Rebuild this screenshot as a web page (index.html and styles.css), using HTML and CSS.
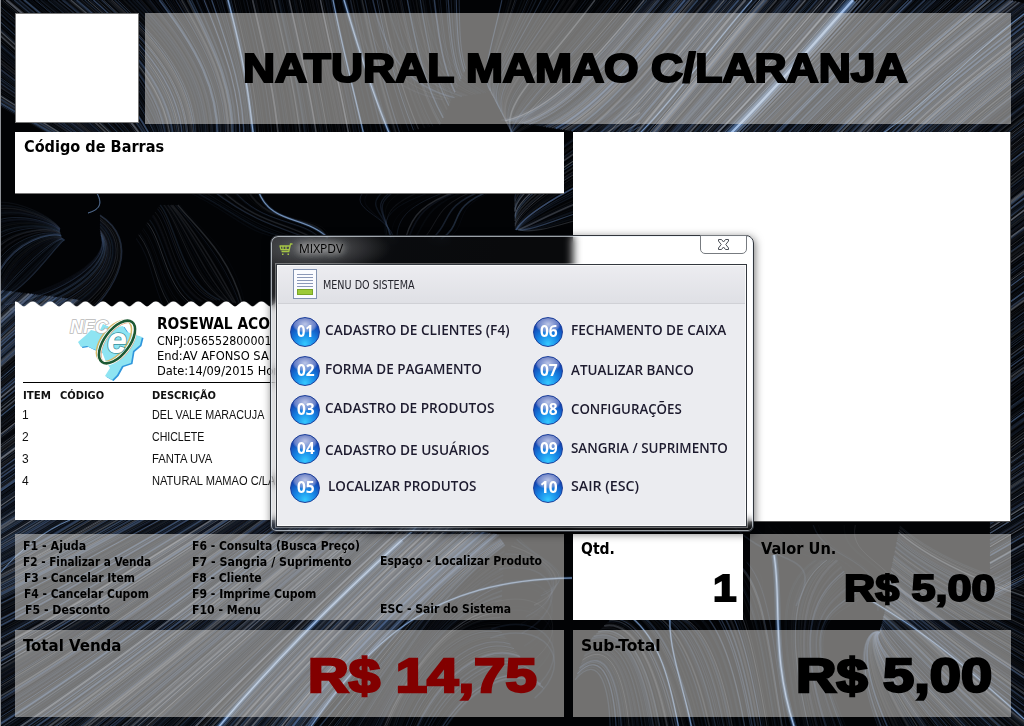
FILE: index.html
```html
<!DOCTYPE html>
<html lang="pt-BR">
<head>
<meta charset="utf-8">
<title>MIXPDV</title>
<link rel="stylesheet" href="styles.css">
</head>
<body>
<canvas class="backdrop" width="1024" height="726"></canvas>
<main class="pdv">
  <header class="top">
    <div class="logo-box"></div>
    <div class="glass product"><span class="black name" data-w="664">NATURAL MAMAO C/LARANJA</span></div>
  </header>
  <section class="middle">
    <div class="left">
      <div class="barcode"><span class="label" data-w="140">Código de Barras</span></div>
      <div class="receipt">
        <svg class="teeth" width="549" height="7"><defs><pattern id="tooth" width="17.6" height="7" patternUnits="userSpaceOnUse"><path d="M0 7V.6Q1.200 .2 2.500 1L7.500 5Q8.800 5.900 10.100 5L15.100 1Q16.400 .2 17.600 .6V7Z" fill="#fff"/></pattern></defs><rect width="549" height="7" fill="url(#tooth)"/></svg>
        <div class="paper">
          <div class="issuer">
            <svg class="nfce" width="80" height="64" viewBox="0 0 80 64">
              <g transform="translate(2 -4)">
              <path d="M14 25l6-6 8 2 4-8 8 4 12-2 4 6 15 5-2 8-7 6-2 12-9 3-5 9-5 5-7-4 5-8-4-6-4-10-9-3-6-3-6 1-3-5z" fill="#2f96dc" transform="translate(1.500 1)"/>
              <path d="M14 25l6-6 8 2 4-8 8 4 12-2 4 6 15 5-2 8-7 6-2 12-9 3-5 9-5 5-7-4 5-8-4-6-4-10-9-3-6-3-6 1-3-5z" fill="#8ee4f2"/>
              </g>
              <g transform="rotate(-53 48 27)" fill="none"><ellipse cx="47" cy="24" rx="24" ry="12.500" stroke="#d6b764" stroke-width="1.500"/><ellipse cx="48" cy="29" rx="24" ry="12.500" stroke="#e59a68" stroke-width="1"/><ellipse cx="48" cy="27" rx="25" ry="12.500" stroke="#fff" stroke-width="4"/><ellipse cx="48" cy="27" rx="25" ry="12.500" stroke="#1d5934" stroke-width="2.600"/></g>
              <text x="38" y="38" class="logo-e">e</text>
              <text x="1" y="18" class="logo-nfc" textLength="38" lengthAdjust="spacingAndGlyphs">NFC</text>
            </svg>
            <div class="company">
              <div><span class="company-name" data-w="113">ROSEWAL ACO</span></div>
              <div><span data-w="115">CNPJ:056552800001</span></div>
              <div><span data-w="112">End:AV AFONSO SA</span></div>
              <div><span data-w="132">Date:14/09/2015 Hora:</span></div>
            </div>
          </div>
          <div class="cols head"><b><span data-w="28">ITEM</span></b><b><span data-w="44">CÓDIGO</span></b><b><span data-w="64">DESCRIÇÃO</span></b></div>
          <div class="cols"><i>1</i><i></i><i><span data-w="112">DEL VALE MARACUJA</span></i></div>
          <div class="cols"><i>2</i><i></i><i><span data-w="52">CHICLETE</span></i></div>
          <div class="cols"><i>3</i><i></i><i><span data-w="60">FANTA UVA</span></i></div>
          <div class="cols"><i>4</i><i></i><i><span data-w="160">NATURAL MAMAO C/LARANJA</span></i></div>
        </div>
      </div>
    </div>
    <div class="photo"></div>
  </section>
  <section class="info">
    <div class="glass keys">
      <ul>
        <li><span data-w="63">F1 - Ajuda</span></li>
        <li><span data-w="128">F2 - Finalizar a Venda</span></li>
        <li class="in1"><span data-w="111">F3 - Cancelar Item</span></li>
        <li class="in1"><span data-w="125">F4 - Cancelar Cupom</span></li>
        <li class="in2"><span data-w="85">F5 - Desconto</span></li>
      </ul>
      <ul>
        <li><span data-w="168">F6 - Consulta (Busca Preço)</span></li>
        <li><span data-w="160">F7 - Sangria / Suprimento</span></li>
        <li><span data-w="70">F8 - Cliente</span></li>
        <li><span data-w="124">F9 - Imprime Cupom</span></li>
        <li><span data-w="69">F10 - Menu</span></li>
      </ul>
      <ul class="wide">
        <li><span data-w="162">Espaço - Localizar Produto</span></li>
        <li><span data-w="131">ESC - Sair do Sistema</span></li>
      </ul>
    </div>
    <div class="panel qty"><span class="label" data-w="34">Qtd.</span><span class="black value one" data-w="24">1</span></div>
    <div class="glass panel unit"><span class="label" data-w="75">Valor Un.</span><span class="black value" data-w="152">R$ 5,00</span></div>
  </section>
  <section class="totals">
    <div class="glass panel total"><span class="label" data-w="98">Total Venda</span><span class="black value" data-w="229">R$ 14,75</span></div>
    <div class="glass panel sub"><span class="label" data-w="80">Sub-Total</span><span class="black value" data-w="196">R$ 5,00</span></div>
  </section>
</main>

<div class="dialog">
  <div class="titlebar">
    <svg width="14" height="13" viewBox="0 0 14 13" fill="none" stroke="#a5c545" stroke-width="1.300"><path d="M13.500 1h-2L9.800 8.500H2.500M.5 3h10M1 3l1 3.700h8M4 3v3M7 3v3"/><path d="M3 10.500h1.500v1.500H3zM8.500 10.500H10v1.500H8.500z" fill="#a5c545" stroke="none"/></svg>
    <span class="caption" data-w="44">MIXPDV</span>
    <button class="close" aria-label="Fechar"><svg width="13" height="11" viewBox="0 0 13 11"><path d="M1.500 .5h3l2 2.500 2-2.500h3V2L8.800 5.500l2.700 3.500v1.500h-3l-2-2.500-2 2.500h-3V9l2.700-3.500L1.500 2z" fill="#fff" stroke="#4b4f56"/></svg></button>
  </div>
  <div class="window">
    <div class="menu-head">
      <svg width="24" height="30" viewBox="0 0 24 30"><rect x=".5" y=".5" width="23" height="29" fill="#fafbff" stroke="#8292b0"/><path d="M4 5.500h16M4 8.500h16M4 11.500h16M4 14.500h16M4 17.500h16" stroke="#8b98b8"/><rect x="4.500" y="20.500" width="15" height="5" fill="#9dca38" stroke="#79a526"/></svg>
      <span data-w="92">MENU DO SISTEMA</span>
    </div>
    <div class="menu">
      <ol>
        <li><span class="ball"><span data-w="17">01</span></span><span class="item" data-w="185">CADASTRO DE CLIENTES (F4)</span></li>
        <li><span class="ball"><span data-w="18">02</span></span><span class="item" data-w="157">FORMA DE PAGAMENTO</span></li>
        <li><span class="ball"><span data-w="18">03</span></span><span class="item" data-w="169">CADASTRO DE PRODUTOS</span></li>
        <li><span class="ball"><span data-w="18">04</span></span><span class="item low" data-w="164">CADASTRO DE USUÁRIOS</span></li>
        <li><span class="ball"><span data-w="18">05</span></span><span class="item inset" data-w="148">LOCALIZAR PRODUTOS</span></li>
      </ol>
      <ol>
        <li><span class="ball"><span data-w="18">06</span></span><span class="item" data-w="155">FECHAMENTO DE CAIXA</span></li>
        <li><span class="ball"><span data-w="18">07</span></span><span class="item down" data-w="123">ATUALIZAR BANCO</span></li>
        <li><span class="ball"><span data-w="18">08</span></span><span class="item down" data-w="111">CONFIGURAÇÕES</span></li>
        <li><span class="ball"><span data-w="18">09</span></span><span class="item down" data-w="157">SANGRIA / SUPRIMENTO</span></li>
        <li><span class="ball"><span data-w="18">10</span></span><span class="item" data-w="68">SAIR (ESC)</span></li>
      </ol>
    </div>
  </div>
</div>
<script src="app.js"></script>
</body>
</html>
```
FILE: styles.css
```css
* { box-sizing: border-box; }
body { margin: 0; width: 1024px; height: 726px; overflow: hidden; position: relative; background: #020306; color: #000; font-family: "DejaVu Sans Condensed", "DejaVu Sans", sans-serif; font-stretch: condensed; }
ol, ul { list-style: none; margin: 0; padding: 0; }
[data-w] { display: inline-block; white-space: nowrap; transform-origin: 0 50%; }
.backdrop { position: absolute; inset: 0; z-index: -1; }
.pdv { height: 726px; padding: 13px 13px 9px 14px; border-left: 1px solid #8d9095; }
.glass { background: rgba(226, 223, 219, .5); }
.black { font-family: "Liberation Sans", Arial, sans-serif; font-weight: 700; -webkit-text-stroke: .052em currentColor; }
.label { font-weight: 700; font-size: 16px; line-height: 21px; }

.top { display: flex; gap: 6px; height: 111px; }
.logo-box { width: 124px; height: 110px; background: #fff; border: 1px solid #777; }
.product { flex: 1; padding-left: 98px; }
.name { font-size: 40px; line-height: 111px; }

.middle { display: flex; gap: 9px; margin-top: 8px; height: 389px; }
.left { width: 549px; display: flex; flex-direction: column; justify-content: space-between; }
.barcode { height: 62px; background: #fff; padding: 4px 9px; border-bottom: 1px solid #777; }
.photo { width: 438px; height: 390px; background: #fff; border: 1px solid #555; border-width: 0 1px 1px 0; }
.receipt { height: 220px; }
.teeth { display: block; }
.paper { height: 212px; background: #fff; padding: 7px 0 0 8px; }
.issuer { height: 68px; display: flex; border-bottom: 1px solid #000; }
.nfce { margin-left: 46px; flex: none; overflow: visible; }
.logo-nfc { font: italic 700 18px "Liberation Sans", sans-serif; fill: #fff; stroke: #b9b9b9; stroke-width: 1.5px; paint-order: stroke; }
.logo-e { font: italic 700 36px "Liberation Sans", sans-serif; fill: #fff; stroke: #3c8e9a; stroke-width: 1.5px; paint-order: stroke; }
.company { margin-left: 8px; font-size: 13px; line-height: 15px; }
.company div:first-child { line-height: 17px; }
.company-name { font-weight: 700; font-size: 16px; }
.cols { display: grid; grid-template-columns: 37px 92px 1fr; height: 22px; font: 12px/22px "Liberation Sans", Arial, sans-serif; color: #111; }
.cols i { font-style: normal; margin-left: -1px; }
.cols i:last-child { margin-left: 0; }
.head { font: 700 11px/25px "DejaVu Sans Condensed", sans-serif; height: 21px; }

.info { display: grid; grid-template: 86px / 549px 170px 259px; column-gap: 9px; margin-top: 13px; height: 86px; }
.unit { margin-left: -2px; }
.keys { display: grid; grid-template-columns: 169px 188px 1fr; padding: 4px 8px 0; font-weight: 700; font-size: 12.5px; line-height: 16px; }
.in1 { padding-left: 1px; }
.in2 { padding-left: 2px; }
.wide { display: flex; flex-direction: column; gap: 32px; padding-top: 15px; }
.panel { position: relative; display: flex; flex-direction: column; padding: 4px 8px; }
.value { align-self: flex-end; transform-origin: 100% 50%; font-size: 37px; line-height: 40px; margin: 10px 7px 0 0; }
.panel .label { align-self: flex-start; }
.qty { background: #fff; }
.qty .value { margin-right: -2px; }
.unit { padding-left: 11px; }
.totals { display: grid; grid-template-columns: 549px 438px; column-gap: 9px; margin-top: 10px; height: 87px; }
.totals .panel { padding-top: 5px; }
.totals .value { font-size: 48px; line-height: 50px; margin: -5px 11px 0 0; }
.totals .total .value { color: #820000; margin-right: 19px; }

.dialog { position: absolute; left: 270px; top: 235px; width: 484px; height: 297px; border: 1px solid #32363c; border-radius: 8px 8px 6px 6px; box-shadow: inset 0 0 0 1px rgba(235, 242, 250, .65), 1px 2px 8px rgba(0, 0, 0, .55); background: radial-gradient(ellipse 75px 24px at 45px 12px, rgba(160, 162, 164, .55), rgba(120, 122, 125, .35) 50%, transparent), linear-gradient(110deg, rgba(125, 125, 130, .3), rgba(60, 63, 68, .15) 22%, rgba(255, 255, 255, .03) 40%); backdrop-filter: blur(4px); padding: 0 6px 5px 5px; }
.titlebar { display: flex; height: 28px; padding: 7px 0 0 3px; font: 12px/14px "Open Sans", sans-serif; color: #000; }
.caption { flex: none; margin: -1px 0 0 6px; text-shadow: 0 0 7px #ccc, 0 0 7px #aaa, 0 0 12px #aaa; }
.close { margin: -8px 0 0 auto; width: 47px; height: 19px; padding: 0; border: 1px solid #777b80; border-radius: 0 0 5px 5px; background: rgba(255, 255, 255, .65); display: grid; place-items: center; }
.window { height: 263px; background: #ebecf0; border: 1px solid #33373e; box-shadow: inset 0 0 0 1px #fafafa, 0 0 0 1px rgba(255, 255, 255, .35); }
.menu-head { height: 38px; margin: 1px; display: flex; align-items: flex-start; gap: 6px; padding: 3px 0 0 15px; border-bottom: 1px solid #d0d1d6; background: linear-gradient(#ececf0, #dfe0e5); font-size: 11.5px; line-height: 32px; color: #24242c; }
.menu { display: grid; grid-template-columns: 243px 1fr; padding: 8px 0 0 13px; }
.menu li { display: flex; height: 39px; align-items: flex-start; padding-top: 4px; }
.ball { flex: none; width: 30px; height: 30px; border-radius: 50%; padding-left: 6px; color: #fff; font: 700 15.5px/27px "Open Sans", sans-serif; border: 1px solid #1c3f9a; background: radial-gradient(ellipse 13px 9px at 50% 22%, rgba(205, 210, 235, .9), rgba(155, 165, 215, .6) 80%, transparent 100%), radial-gradient(circle at 50% 92%, #35c8ff 0, #1787e6 35%, #1242b0 72%, #16318c 100%); }
.item { margin: 3px 0 0 5px; font: 600 14px/20px "Open Sans", "Noto Sans", sans-serif; color: #1d1b2e; }
.menu ol:last-child .item { margin-left: 8px; }
.item.low { margin-top: 6px; }
.item.down { margin-top: 4px; }
.menu .item.inset { margin-left: 8px; }
```
FILE: app.js
```js
// Scale each caption to the width it has in the layout.
document.querySelectorAll('[data-w]').forEach(el => {
  el.style.transform = 'scaleX(' + (el.dataset.w / el.offsetWidth) + ')';
});

// Flow-line wallpaper: curves interpolated between guide beziers.
const ctx = document.querySelector('.backdrop').getContext('2d');
let seed = 77;
const rnd = () => (seed = (seed * 16807) % 2147483647) / 2147483647;

function curve(p, style, width) {
  ctx.strokeStyle = style;
  ctx.lineWidth = width;
  ctx.beginPath();
  ctx.moveTo(p[0], p[1]);
  ctx.bezierCurveTo(p[2], p[3], p[4], p[5], p[6], p[7]);
  ctx.stroke();
}
function family(guides, count, strength) {
  for (let i = 0; i < count; i++) {
    const t = (i + rnd()) / count * (guides.length - 1);
    const k = Math.min(Math.floor(t), guides.length - 2);
    const p = guides[k].map((v, j) => v + (guides[k + 1][j] - v) * (t - k));
    const a = strength * (0.1 + 0.55 * Math.pow(rnd(), 3.5));
    const tone = rnd() < 0.35 ? '125,132,145' : '78,104,145';
    curve(p, `rgba(${tone},${a})`, 0.5 + rnd() * 1.3);
  }
}
function bright(p, w) {
  curve(p, 'rgba(70,110,165,.25)', w * 3.5);
  curve(p, 'rgba(110,150,205,.5)', w * 1.8);
  curve(p, 'rgba(175,205,245,.85)', w * 0.7);
}
ctx.fillStyle = '#020305';
ctx.fillRect(0, 0, 1024, 726);

// upper left fan
family([[-60,70,20,120,80,150,150,190],[-40,0,30,60,100,130,160,180],[60,0,110,40,170,90,165,160],[130,0,170,40,215,90,200,170],[228,0,240,50,250,90,253,140],[335,0,345,50,355,90,365,140]], 230, 1);
family([[335,0,345,50,355,90,365,140],[400,0,410,50,420,90,440,125],[462,0,462,30,462,50,467,66]], 40, .8);
family([[345,0,360,60,385,90,440,100],[440,0,450,50,460,75,490,92]], 18, .6);
family([[500,0,490,50,480,75,490,90],[580,0,530,70,490,100,512,132],[660,0,600,70,540,130,510,135]], 50, .8);
// upper right diagonals
family([[640,0,590,60,550,110,500,120],[745,0,705,45,670,95,630,140],[853,0,810,50,770,95,724,140],[1010,0,940,55,880,105,840,150],[1100,20,1020,80,950,130,900,190],[1100,180,1060,210,1030,230,990,260],[1100,380,1060,410,1030,430,990,460],[1100,540,1060,565,1030,580,990,600]], 720, 1.1);
family([[640,90,570,140,510,180,515,200],[640,150,580,170,520,210,515,230],[620,210,570,220,540,235,520,230]], 40, .9);
// left-hand swirls
family([[0,200,20,200,50,215,60,228],[0,235,20,225,50,225,60,232],[0,290,15,250,50,235,62,238],[0,300,30,290,60,240,65,240]], 46, .7);
family([[0,300,60,290,105,260,102,240],[20,320,90,300,125,260,100,230],[80,320,120,290,140,240,100,215]], 34, .7);
family([[160,305,150,280,150,260,135,240],[220,300,180,285,175,220,160,205],[245,305,235,250,200,230,180,205]], 26, .6);
family([[180,190,240,215,240,240,300,240],[255,190,270,230,330,210,330,240]], 14, .65);
family([[360,190,340,210,390,215,395,240],[440,190,410,200,380,210,385,235],[500,190,450,210,480,225,450,240]], 18, .6);
bright([258,190,270,225,305,215,328,238], .8);
bright([95,190,105,205,98,210,88,213], .4);
// lower left diagonals
family([[0,290,-10,300,-30,320,-50,340],[80,300,20,350,-10,380,-50,410],[160,400,90,450,30,500,-40,540],[270,460,170,510,70,570,-40,620],[360,480,230,580,90,690,-20,760],[425,520,350,590,250,690,190,760],[500,535,420,600,340,680,290,760]], 720, 1.1);
family([[500,538,420,580,350,680,290,740],[505,545,430,600,390,680,350,740],[500,630,450,620,400,690,390,740],[545,690,510,660,460,700,440,740]], 90, .7);
family([[520,535,530,560,590,570,545,590],[500,560,560,550,570,600,520,625],[490,640,540,620,580,660,535,700]], 18, .3);
// lower right sprays
family([[610,735,610,690,600,650,575,680],[650,735,640,660,620,630,590,640],[690,735,670,650,640,610,620,610],[735,735,720,640,690,610,675,620],[790,735,775,650,775,590,750,560]], 100, .75);
family([[800,735,785,650,770,590,815,560],[820,735,795,650,800,590,838,560],[850,735,800,620,830,620,860,600]], 34, .6);
family([[880,735,850,660,865,630,878,632],[960,735,900,670,870,640,880,632],[1030,735,970,690,920,630,885,610],[1080,700,980,640,920,600,890,575],[1080,600,1000,580,940,560,900,525]], 200, .9);
family([[575,525,610,560,640,600,600,640],[760,525,800,570,860,540,830,600],[860,525,850,560,900,560,920,620]], 14, .35);

bright([228,0,244,60,248,90,254,140], 1.1);
bright([333,0,345,60,355,95,365,140], .7);
bright([344,0,362,60,375,100,392,140], 1.2);
bright([752,0,710,48,670,105,635,138], .7);
bright([853,0,815,42,770,95,724,140], 3.2);
bright([1024,14,970,55,920,110,880,135], .45);
bright([212,735,270,665,330,605,402,540], 2.1);
bright([402,540,408,535,415,530,420,522], 1.2);
bright([305,735,370,640,430,580,572,578], .8);
bright([70,520,45,530,20,550,0,573], .5);
bright([774,555,782,600,770,660,797,735], 1.7);
bright([630,616,660,640,670,680,680,735], .7);
bright([670,616,668,650,685,690,693,735], .7);
bright([870,600,930,635,970,670,1034,728], .8);
```
